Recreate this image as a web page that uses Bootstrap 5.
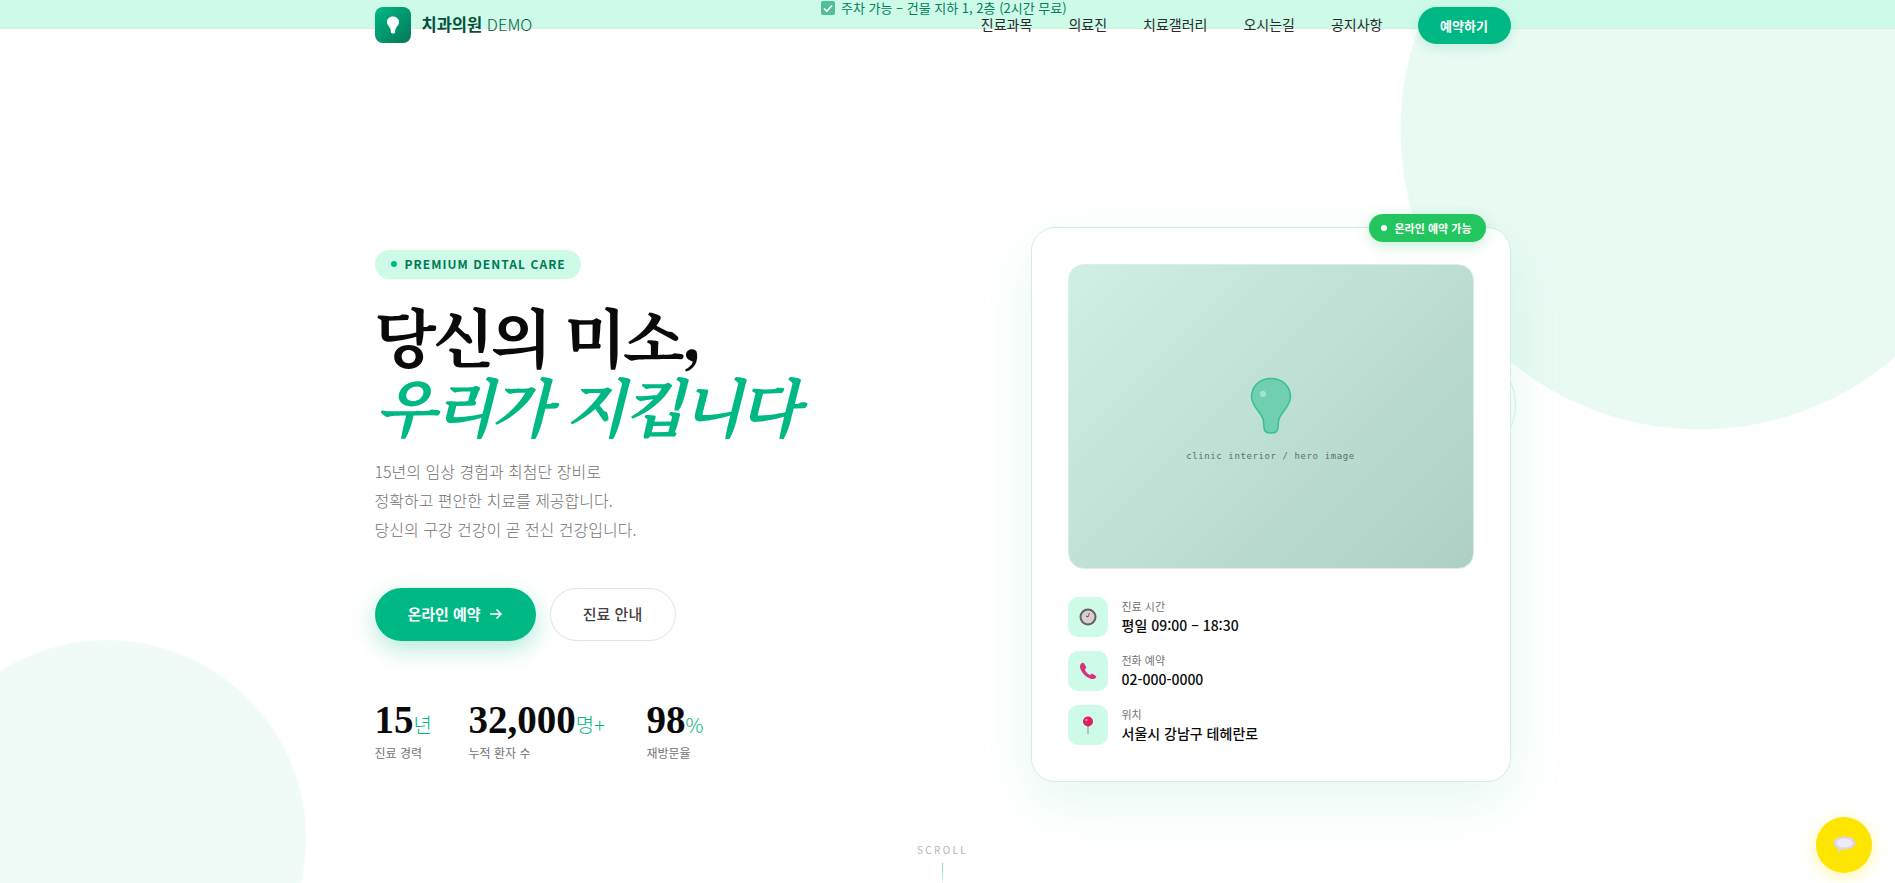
<!DOCTYPE html>
<html lang="ko">
<head>
  <meta charset="UTF-8">
  <title>치과의원 DEMO</title>
  <link href="https://cdn.jsdelivr.net/npm/bootstrap@5.3.0/dist/css/bootstrap.min.css" rel="stylesheet">
  <style>
    html, body { height: 100%; }
    body {
      font-family: "Noto Sans CJK KR", "Noto Sans", sans-serif;
      color: #0a0a0a;
      overflow: hidden;
      position: relative;
      background:
        radial-gradient(circle 300px at 1700px 130px, #e9faf3 99.6%, transparent 100%),
        radial-gradient(circle 200px at 107px 839px, #f0fbf7 99%, transparent 100%),
        #fff;
    }
    .ring { position: absolute; left: 1396px; top: 345px; width: 120px; height: 120px; border-radius: 50%; border: 1px solid #d1fae5; }
    .topnote {
      position: absolute; top: 0; left: 0; right: 0; height: 29px;
      background: #cdfbe8; border-bottom: 1px solid #d3eee3;
      color: #00805c; font-size: 13px; line-height: 16px; text-align: center; padding-right: 7px;
    }
    .chk { display: inline-block; width: 14px; height: 14px; vertical-align: -2px; margin-right: 2px; }
    .site-nav { position: relative; height: 50px; padding-top: 7px; margin: 0 auto; width: 1136px; transform: translateX(-5px); }
    .logo-box { width: 36px; height: 36px; border-radius: 8px; background: linear-gradient(135deg, #00b884, #047857); }
    .logo-name { font-size: 16.5px; font-weight: 700; color: #064e3b; margin-top: 5px; margin-left: 3px; }
    .logo-name span { font-weight: 300; color: #065f46; }
    .nav-links { gap: 36px; }
    .nav-txt { font-size: 14px; color: #2a2a2a; text-decoration: none; margin-top: -3px; }
    .btn-book { background: #00b884; color: #fff; font-size: 13px; font-weight: 700; border-radius: 30px; width: 93px; height: 37px; line-height: 37px; text-align: center; box-shadow: 0 4px 12px rgba(0,184,132,.18); margin-left: -1px; }
    .hero { position: relative; width: 1136px; margin: 0 auto; transform: translateX(-5px); padding-top: 177px; }
    .hero-left { width: 520px; padding-top: 21px; }
    .eyebrow { display: inline-flex; align-items: center; gap: 8px; background: #cdfbe8; color: #007a55; font-size: 12px; font-weight: 600; letter-spacing: 1.05px; height: 29px; padding: 0 15px 0 16px; border-radius: 15px; }
    .eyebrow i { width: 6px; height: 6px; border-radius: 50%; background: #00b884; }
    .hero-title { font-family: "Noto Serif CJK KR", "Noto Serif KR", "Liberation Serif", serif; font-size: 64px; line-height: 70px; font-weight: 700; margin: 20px 0 0; letter-spacing: -3.8px; }
    .hero-title em { color: #00b884; font-style: italic; font-weight: 700; display: block; }
    .hero-desc { font-size: 16px; line-height: 29px; font-weight: 300; color: #737373; margin: 18px 0 0; }
    .btn-row { gap: 14px; margin-top: 44px; }
    .btn-main { background: #00b884; color: #fff; font-size: 15px; font-weight: 700; border-radius: 28px; width: 161px; height: 53px; box-shadow: 0 8px 24px rgba(0,184,132,.3); }
    .btn-sub { color: #404040; font-size: 15px; font-weight: 500; border-radius: 28px; width: 126px; height: 53px; border: 1px solid #e2e2e2; background: #fff; }
    .stat-grid { display: grid; grid-template-columns: 94px 178px auto; margin-top: 61px; }
    .stat-num { font-family: "Liberation Serif", serif; font-size: 39px; font-weight: 700; line-height: 36px; }
    .stat-num span { font-family: "Noto Sans CJK KR", sans-serif; font-size: 20px; font-weight: 300; color: #00b884; }
    .stat-lbl { font-size: 12px; color: #737373; line-height: 16px; margin-top: 2px; }
    .hero-card { position: relative; width: 480px; height: 555px; margin-left: auto; background: #fff; border: 1px solid #d5ebe3; border-radius: 24px; padding: 36px; box-shadow: 0 20px 60px rgba(0,184,132,.1); }
    .badge-live { position: absolute; top: -14px; right: 24px; height: 28px; padding: 0 14px 0 12px; background: #22c55e; color: #fff; font-size: 11px; font-weight: 700; border-radius: 14px; display: flex; align-items: center; gap: 8px; box-shadow: 0 4px 14px rgba(34,197,94,.25); }
    .badge-live i { width: 6px; height: 6px; background: #fff; border-radius: 50%; }
    .photo { height: 305px; border-radius: 16px; background: linear-gradient(135deg, #cfefe5, #aecfc4); border: 1px solid #d8eee6; }
    .photo-cap { font-family: "DejaVu Sans Mono", monospace; font-size: 9px; letter-spacing: .6px; color: #5b6f68; margin-top: 15px; }
    .info-list { gap: 14px; margin-top: 28px; }
    .info-row { gap: 14px; }
    .info-ic { width: 40px; height: 40px; border-radius: 10px; background: #cdfbe8; display: flex; align-items: center; justify-content: center; }
    .info-lbl { font-size: 11px; line-height: 15px; color: #737373; }
    .info-val { font-size: 14px; line-height: 22px; font-weight: 500; color: #0a0a0a; }
    .scroll-cue { position: absolute; left: 0; width: 1885px; top: 842px; text-align: center; font-size: 10px; letter-spacing: 2.3px; color: #b0b4ba; }
    .scroll-cue i { display: block; width: 1px; height: 24px; margin: 6px auto 0; background: linear-gradient(rgba(0,184,132,.55), transparent); }
    .kakao { position: absolute; right: 23px; top: 817px; width: 56px; height: 56px; border-radius: 50%; background: #fee500; display: flex; align-items: center; justify-content: center; box-shadow: 0 4px 16px rgba(254,229,0,.35); }
  </style>
</head>
<body>

<div class="ring"></div>

<div class="topnote">
  <svg class="chk" viewBox="0 0 14 14"><rect width="14" height="14" rx="2" fill="#4fbf95"/><path d="M3 7.500l2.800 2.800L11 4.500" fill="none" stroke="#fff" stroke-width="1.600"/></svg>
  주차 가능 – 건물 지하 1, 2층 (2시간 무료)
</div>

<!-- 상단 메뉴 -->
<nav class="site-nav d-flex align-items-start">
  <div class="logo-box d-flex align-items-center justify-content-center me-2">
    <svg width="14" height="18" viewBox="0 0 42 58"><path d="M21 1.500C9.500 1.500 1.500 9.500 1.500 20c0 9 9 14.500 11.500 22 1 3 .5 8 1.500 11 .8 2.500 2.500 3 6.500 3s5.700-.5 6.500-3c1-3 .5-8 1.500-11 2.500-7.500 11.500-13 11.500-22C40.500 9.500 32.500 1.500 21 1.500z" fill="#fff"/></svg>
  </div>
  <div class="logo-name">치과의원 <span>DEMO</span></div>
  <div class="nav-links d-flex align-items-center ms-auto">
    <a class="nav-txt" href="#">진료과목</a>
    <a class="nav-txt" href="#">의료진</a>
    <a class="nav-txt" href="#">치료갤러리</a>
    <a class="nav-txt" href="#">오시는길</a>
    <a class="nav-txt" href="#">공지사항</a>
    <div class="btn-book">예약하기</div>
  </div>
</nav>

<main class="hero d-flex">
  <div class="hero-left">
    <div class="eyebrow"><i></i>PREMIUM DENTAL CARE</div>
    <h1 class="hero-title">당신의 미소,<em>우리가 지킵니다</em></h1>
    <p class="hero-desc">15년의 임상 경험과 최첨단 장비로<br>정확하고 편안한 치료를 제공합니다.<br>당신의 구강 건강이 곧 전신 건강입니다.</p>
    <div class="btn-row d-flex">
      <a class="btn-main d-flex align-items-center justify-content-center gap-2 text-decoration-none" href="#">온라인 예약
        <svg width="14" height="12" viewBox="0 0 14 12"><path d="M1 6h11M7.500 1.500L12 6l-4.500 4.500" fill="none" stroke="#fff" stroke-width="1.500"/></svg>
      </a>
      <a class="btn-sub d-flex align-items-center justify-content-center text-decoration-none" href="#">진료 안내</a>
    </div>
    <div class="stat-grid">
      <div><div class="stat-num">15<span>년</span></div><div class="stat-lbl">진료 경력</div></div>
      <div><div class="stat-num">32,000<span>명+</span></div><div class="stat-lbl">누적 환자 수</div></div>
      <div><div class="stat-num">98<span>%</span></div><div class="stat-lbl">재방문율</div></div>
    </div>
  </div>

  <div class="hero-card">
    <div class="badge-live"><i></i>온라인 예약 가능</div>
    <div class="photo d-flex flex-column align-items-center justify-content-center">
      <svg width="42" height="58" viewBox="0 0 42 58" style="margin-top:8px"><path d="M21 1.500C9.500 1.500 1.500 9.500 1.500 20c0 9 9 14.500 11.500 22 1 3 .5 8 1.500 11 .8 2.500 2.500 3 6.500 3s5.700-.5 6.500-3c1-3 .5-8 1.500-11 2.500-7.500 11.500-13 11.500-22C40.500 9.500 32.500 1.500 21 1.500z" fill="#6fcfb0" stroke="#34c094" stroke-width="1.500"/><circle cx="13" cy="17" r="3" fill="#a5e3cf"/></svg>
      <div class="photo-cap">clinic interior / hero image</div>
    </div>
    <div class="info-list d-flex flex-column">
      <div class="info-row d-flex align-items-center">
        <div class="info-ic"><svg width="18" height="18" viewBox="0 0 18 18"><circle cx="9" cy="9" r="7.500" fill="#d6d0d6" stroke="#66605f" stroke-width="2"/><path d="M9 9l1.500-4" stroke="#c2410c" stroke-width="1"/><path d="M9 9L7 8" stroke="#444" stroke-width="1"/></svg></div>
        <div><div class="info-lbl">진료 시간</div><div class="info-val">평일 09:00 – 18:30</div></div>
      </div>
      <div class="info-row d-flex align-items-center">
        <div class="info-ic"><svg width="18" height="18" viewBox="0 0 18 18"><path d="M3 1c-1.500 1-2.500 2.500-2 4.500C2 10 7 15.500 12.500 17c1.500.4 3.500-.2 4.500-1.500.4-.5.3-1.200-.2-1.600l-2.800-2c-.6-.4-1.300-.3-1.800.2l-1 1C8.500 12 6.500 9.500 5.800 7.500l1-1c.5-.6.500-1.300.1-1.900L5 1.300C4.500.7 3.600.6 3 1z" fill="#d6337f"/></svg></div>
        <div><div class="info-lbl">전화 예약</div><div class="info-val">02-000-0000</div></div>
      </div>
      <div class="info-row d-flex align-items-center">
        <div class="info-ic"><svg width="12" height="18" viewBox="0 0 12 18"><path d="M6 9v9" stroke="#9aa5a0" stroke-width="1.200"/><circle cx="6" cy="5.500" r="5" fill="#e11d64"/><circle cx="4.500" cy="4" r="1.200" fill="#f58ab0"/></svg></div>
        <div><div class="info-lbl">위치</div><div class="info-val">서울시 강남구 테헤란로</div></div>
      </div>
    </div>
  </div>
</main>

<div class="scroll-cue">SCROLL<i></i></div>

<a class="kakao" href="#">
  <svg width="23" height="18" viewBox="0 0 23 18"><path d="M11.500 .5C5.400 .5 .5 3.300 .5 7c0 2.400 2 4.300 4.800 5.400L4.800 17l4.200-3.700c.8.100 1.700.2 2.500.2 6.100 0 11-2.900 11-6.500S17.600 .5 11.500 .5z" fill="#dcd3ee"/><ellipse cx="11.500" cy="7" rx="8" ry="4.600" fill="#efeaf8"/></svg>
</a>

<script src="https://cdn.jsdelivr.net/npm/bootstrap@5.3.0/dist/js/bootstrap.bundle.min.js"></script>
</body>
</html>
